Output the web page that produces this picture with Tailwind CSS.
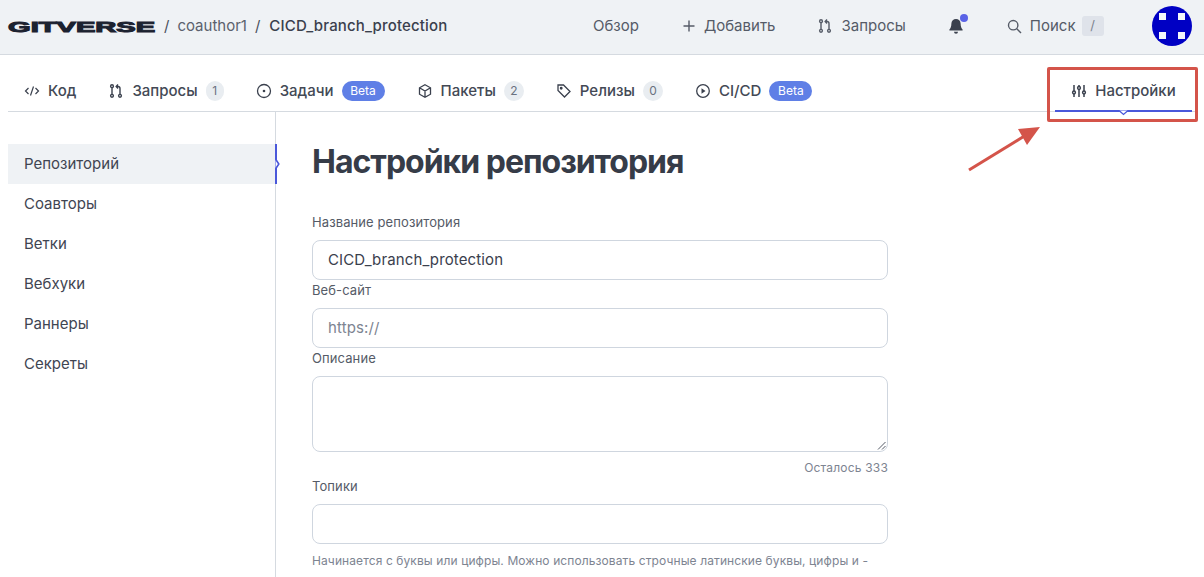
<!DOCTYPE html>
<html lang="ru">
<head>
  <meta charset="UTF-8" />
  <script src="https://cdn.jsdelivr.net/npm/@tailwindcss/browser@4"></script>
  <title>Настройки репозитория</title>
</head>
<body class="bg-white font-['Inter',sans-serif] text-[#3a404d] h-[577px] overflow-hidden relative">
  <!-- Шапка -->
  <header class="h-[55px] bg-[#eff2f5] border-b border-[#d5dae0] flex items-center text-[15px] pb-[2px]">
    <div class="w-[148px] ml-2 overflow-visible">
      <span class="block origin-left scale-x-[1.94] font-['Liberation_Sans',sans-serif] font-bold text-[15px] leading-none text-[#1c2230] [-webkit-text-stroke:1px_#1c2230]">GITVERSE</span>
    </div>
    <span class="ml-2 text-[#4a505c]">/</span>
    <span class="ml-2 text-[#5b616d]">coauthor1</span>
    <span class="ml-2 text-[#4a505c]">/</span>
    <span class="ml-[9px] font-medium tracking-[0.15px] text-[#3a404d]">CICD_branch_protection</span>
    <nav class="absolute top-0 left-0 w-full h-[52px] pointer-events-none text-[#555b67]">
      <div class="flex items-center h-full pl-[593px]">
        <span>Обзор</span>
        <svg class="ml-[43px] mr-[8px]" width="14" height="14" viewBox="0 0 14 14" fill="none" stroke="#555b67" stroke-width="1.4"><path d="M7 1.5v11M1.5 7h11"/></svg>
        <span>Добавить</span>
        <svg class="ml-[41px] mr-[9px]" width="16" height="16" viewBox="0 0 16 16" fill="none" stroke="#555b67" stroke-width="1.4"><circle cx="4" cy="3.2" r="1.4"/><circle cx="4" cy="12.8" r="1.4"/><circle cx="12" cy="12.8" r="1.4"/><path d="M4 4.6v6.8M12 11.4V5.5a2 2 0 0 0-2-2H8.5M10 1.6 8.2 3.5 10 5.4"/></svg>
        <span>Запросы</span>
        <div class="relative ml-[42px] w-[16px] h-[18px]">
          <svg width="16" height="18" viewBox="0 0 16 18" fill="#3a404d"><path d="M8 2a4.6 4.6 0 0 0-4.6 4.6c0 3.6-1.2 5-2 6v.9h13.200v-.9c-.8-1-2-2.400-2-6A4.600 4.600 0 0 0 8 2z"/><path d="M6 14.800h4a2 2 0 0 1-4 0z"/></svg>
          <span class="absolute top-[-3px] right-[-4px] w-[8px] h-[8px] rounded-full bg-[#5a63e6]"></span>
        </div>
        <svg class="ml-[43px] mr-[8px]" width="15" height="15" viewBox="0 0 15 15" fill="none" stroke="#555b67" stroke-width="1.400"><circle cx="6.200" cy="6.200" r="4.700"/><path d="m9.800 9.800 4.200 4.200"/></svg>
        <span>Поиск</span>
        <span class="ml-[6px] w-[22px] h-[20px] rounded-[3px] bg-[#dfe3ea] text-[#7d8491] text-[13px] flex items-center justify-center">/</span>
        <svg class="ml-[47px]" width="42" height="42" viewBox="0 0 42 42">
          <defs><clipPath id="avatarClip"><circle cx="21" cy="21" r="20"/></clipPath></defs>
          <g clip-path="url(#avatarClip)">
            <rect width="42" height="42" fill="#0000c4"/>
            <path fill="#f4f6fa" d="M8 8h7v7H8zM27 8h7v7h-7zM8 27h7v7H8zM27 27h7v7h-7z"/>
          </g>
        </svg>
      </div>
    </nav>
  </header>

  <!-- Вкладки -->
  <div class="mx-2 h-[57px] border-b border-[#d5dae0] flex items-center text-[15px] font-medium text-[#434955] pl-4 pt-[26px] pb-[10px] relative">
    <svg width="16" height="16" viewBox="0 0 16 16" fill="none" stroke="#3a404d" stroke-width="1.200"><path d="M4.500 5 1.500 8l3 3M11.500 5l3 3-3 3M9.500 3.500l-3 9"/></svg>
    <span class="ml-2">Код</span>
    <svg class="ml-[32px]" width="16" height="16" viewBox="0 0 16 16" fill="none" stroke="#3a404d" stroke-width="1.400"><circle cx="4" cy="3.200" r="1.400"/><circle cx="4" cy="12.800" r="1.400"/><circle cx="12" cy="12.800" r="1.400"/><path d="M4 4.600v6.800M12 11.400V5.500a2 2 0 0 0-2-2H8.500M10 1.600 8.200 3.500 10 5.400"/></svg>
    <span class="ml-2 -ml-px">Запросы</span>
    <span class="ml-2 w-[18px] h-[20px] rounded-full bg-[#e9edf1] text-[#6a7180] text-[12px] font-normal flex items-center justify-center">1</span>
    <svg class="ml-[32px]" width="16" height="16" viewBox="0 0 16 16" fill="none" stroke="#3a404d" stroke-width="1.300"><circle cx="8" cy="8" r="6.500"/><circle cx="8" cy="8" r="1.300" fill="#3a404d" stroke="none"/></svg>
    <span class="ml-2">Задачи</span>
    <span class="ml-2 w-[43px] h-[20px] rounded-full bg-[#5f7fe6] text-white text-[12px] font-normal flex items-center justify-center">Beta</span>
    <svg class="ml-[32px]" width="16" height="16" viewBox="0 0 16 16" fill="none" stroke="#3a404d" stroke-width="1.300"><path d="M8 1.800 13.500 4.800v6.400L8 14.200l-5.500-3V4.800zM2.500 4.800 8 8l5.500-3.200M8 8v6.200"/></svg>
    <span class="ml-2">Пакеты</span>
    <span class="ml-2 w-[20px] h-[20px] rounded-full bg-[#e9edf1] text-[#6a7180] text-[12px] font-normal flex items-center justify-center">2</span>
    <svg class="ml-[32px]" width="16" height="16" viewBox="0 0 16 16" fill="none" stroke="#3a404d" stroke-width="1.300"><path d="M2 2h5.500l6.500 6.500-5.500 5.500L2 7.500z"/><circle cx="5.200" cy="5.200" r=".8" fill="#3a404d"/></svg>
    <span class="ml-2">Релизы</span>
    <span class="ml-2 w-[20px] h-[20px] rounded-full bg-[#e9edf1] text-[#6a7180] text-[12px] font-normal flex items-center justify-center">0</span>
    <svg class="ml-[32px]" width="16" height="16" viewBox="0 0 16 16" fill="none" stroke="#3a404d" stroke-width="1.300"><circle cx="8" cy="8" r="6.300"/><path d="M6.500 5.300v5.400L10.500 8z" fill="#3a404d" stroke="none"/></svg>
    <span class="ml-2">CI/CD</span>
    <span class="ml-2 w-[43px] h-[20px] rounded-full bg-[#5f7fe6] text-white text-[12px] font-normal flex items-center justify-center">Beta</span>
    <div class="ml-auto mr-[4px] w-[137px] h-[57px] -mt-[26px] -mb-[11px] relative flex items-center justify-center pt-[26px] pb-[9px] border-b-2 border-[#4a58da]">
      <svg width="16" height="16" viewBox="0 0 16 16" fill="none" stroke="#3a404d" stroke-width="1.500"><path d="M3 2v12M8 2v12M13 2v12"/><circle cx="3" cy="9.500" r="1.400" fill="#fff"/><circle cx="8" cy="5" r="1.400" fill="#fff"/><circle cx="13" cy="9.500" r="1.400" fill="#fff"/></svg>
      <span class="ml-2">Настройки</span>
      <svg class="absolute left-[63px] bottom-[-6px]" width="11" height="6" viewBox="0 0 11 6" fill="#fff" stroke="#4a58da" stroke-width="1.300"><path d="M1 0.500 5.500 4.500 10 0.500"/></svg>
    </div>
  </div>

  <div class="flex">
    <!-- Боковое меню -->
    <aside class="ml-2 w-[268px] h-[465px] border-r border-[#d5dae0] pt-8 text-[15px] text-[#3f4552] shrink-0">
      <div class="relative h-10 bg-[#eff2f5] flex items-center pl-4 border-r-2 border-[#4a58da] -mr-[2px]">
        Репозиторий
        <svg class="absolute right-[-5px] top-[14px]" width="5" height="12" viewBox="0 0 5 12" fill="#fff" stroke="#4a58da" stroke-width="1.600"><path d="M0.500 1 3.800 6 0.500 11"/></svg>
      </div>
      <div class="h-10 flex items-center pl-4">Соавторы</div>
      <div class="h-10 flex items-center pl-4">Ветки</div>
      <div class="h-10 flex items-center pl-4">Вебхуки</div>
      <div class="h-10 flex items-center pl-4">Раннеры</div>
      <div class="h-10 flex items-center pl-4">Секреты</div>
    </aside>

    <!-- Форма -->
    <main class="ml-9 w-[576px]">
      <h1 class="mt-[30px] h-[40px] leading-[40px] text-[32px] font-bold tracking-[-1px] text-[#363c48]">Настройки репозитория</h1>
      <label class="block mt-[31px] h-[18px] leading-[18px] text-[13px] tracking-[0.1px] text-[#555b67]">Название репозитория</label>
      <div class="mt-[9px] h-[40px] rounded-lg border border-[#cfd6df] flex items-center pl-[15px] text-[15px] tracking-[0.12px] text-[#3a404d]">CICD_branch_protection</div>
      <label class="block mt-[1px] h-[18px] leading-[18px] text-[13px] tracking-[0.1px] text-[#555b67]">Веб-сайт</label>
      <div class="mt-[9px] h-[40px] rounded-lg border border-[#cfd6df] flex items-center pl-[15px] text-[15px] tracking-[0.12px] text-[#7d8491]">https://</div>
      <label class="block mt-[1px] h-[18px] leading-[18px] text-[13px] tracking-[0.1px] text-[#555b67]">Описание</label>
      <div class="relative mt-[9px] h-[76px] rounded-lg border border-[#cfd6df]">
        <svg class="absolute right-[1px] bottom-[1px]" width="9" height="9" viewBox="0 0 9 9" fill="none" stroke="#555b67"><path d="M1 8.500 8.500 1M5 8.500 8.500 5"/></svg>
      </div>
      <p class="mt-[8px] h-[16px] leading-[16px] text-right text-[12px] tracking-[0.18px] text-[#7d8491]">Осталось 333</p>
      <label class="block mt-[1px] h-[18px] leading-[18px] text-[13px] tracking-[0.1px] text-[#555b67]">Топики</label>
      <div class="mt-[9px] h-[40px] rounded-lg border border-[#cfd6df]"></div>
      <p class="mt-[9px] text-[12px] leading-[16px] tracking-[0.1px] text-[#7d8491] whitespace-nowrap">Начинается с буквы или цифры. Можно использовать строчные латинские буквы, цифры и -</p>
    </main>
  </div>

  <!-- Аннотация поверх скриншота -->
  <div class="absolute left-[1047px] top-[67px] w-[151px] h-[55px] border-[3px] border-[#d4544a] rounded-[2px]"></div>
  <svg class="absolute left-[960px] top-[120px]" width="90" height="56" viewBox="0 0 90 56" fill="none">
    <path d="M9 50 66 15" stroke="#d4544a" stroke-width="3"/>
    <path d="M80 7 58 9 67 25z" fill="#d4544a"/>
  </svg>
</body>
</html>
